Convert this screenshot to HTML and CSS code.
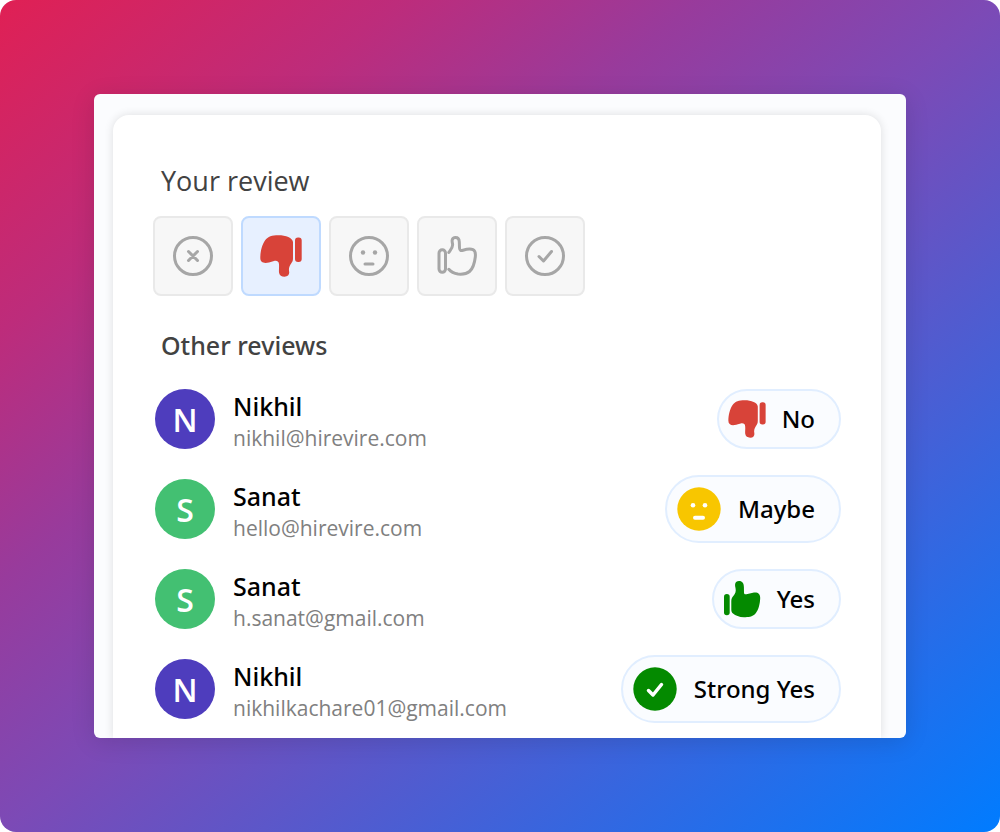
FILE: index.html
```html
<!DOCTYPE html>
<html lang="en">
<head>
    <meta charset="UTF-8">
    <meta name="viewport" content="width=device-width, initial-scale=1.0">
    <title>Reviews</title>
    <link rel="stylesheet" href="styles.css">
</head>
<body>
    <!-- shapes used more than once -->
    <svg class="sprite" aria-hidden="true">
        <symbol id="thumb-down" viewBox="0 0 42 42" overflow="visible">
            <path d="M33 7C32.500 3 26 .3 18.300 .3C12 .3 8 1.500 5 5.500C2 9.500 .3 17 .3 23C.3 27.500 4 28.700 9 27.400L14 26C17 25.400 19 26.500 19 29.500C19.200 32 18.800 35 19 37.500C19.500 40.500 21.500 41.700 24.500 41.700C28 41.700 29.500 39.500 29.200 37C28.500 33.500 29.200 32 30.500 29.500C32 27 33 26.500 33 23Z"/>
            <rect x="35" y="2.500" width="6.700" height="24.500" rx="3"/>
        </symbol>
    </svg>

    <main class="page">
        <div class="frame">
            <div class="card">
                <h2 class="title">Your review</h2>
                <div class="options">
                    <button type="button" class="option" aria-label="Strong No">
                        <svg class="icon line" viewBox="0 0 40 40">
                            <circle cx="20" cy="20" r="18.500"/>
                            <path d="M15.500 15.500L24.500 24.500M24.500 15.500L15.500 24.500"/>
                        </svg>
                    </button>
                    <button type="button" class="option selected" aria-label="No" aria-pressed="true">
                        <svg class="icon-thumb red" viewBox="0 0 42 42"><use href="#thumb-down"/></svg>
                    </button>
                    <button type="button" class="option" aria-label="Maybe">
                        <svg class="icon line" viewBox="0 0 40 40">
                            <circle cx="20" cy="20" r="18.500"/>
                            <path d="M16 28H24"/>
                            <circle class="dot" cx="14" cy="16.500" r="2.200"/>
                            <circle class="dot" cx="26" cy="16.500" r="2.200"/>
                        </svg>
                    </button>
                    <button type="button" class="option" aria-label="Yes">
                        <svg class="icon line" viewBox="0 0 40 40">
                            <rect x="2" y="13.800" width="6.500" height="22.500" rx="3.200"/>
                            <path d="M11.800 16.500C13 14.500 15.500 12.500 15.600 9C15.700 7 14.800 6.200 15.200 4C15.600 2.200 17 1.500 18.500 1.500C21 1.500 22.200 3.500 22.300 6L22.500 12C22.700 14.600 24 14.800 26 14.200C30 13 33.500 12.600 36 13.600C38.500 14.700 38.700 17.500 38.300 21C37.600 27 36 32.500 32.500 35.500C29.500 38 25 38.400 21 38C17 37.500 14 36 11.800 33.300"/>
                        </svg>
                    </button>
                    <button type="button" class="option" aria-label="Strong Yes">
                        <svg class="icon line" viewBox="0 0 40 40">
                            <circle cx="20" cy="20" r="18.500"/>
                            <path d="M14 20.500L18.500 25L26.500 15.500"/>
                        </svg>
                    </button>
                </div>

                <h2 class="title medium">Other reviews</h2>
                <ul class="reviews">
                    <li class="review">
                        <span class="avatar purple">N</span>
                        <div class="person">
                            <div class="name">Nikhil</div>
                            <div class="email">nikhil@hirevire.com</div>
                        </div>
                        <div class="badge">
                            <svg class="badge-thumb red" viewBox="1 1 40 40"><use href="#thumb-down" width="42" height="42"/></svg>
                            No
                        </div>
                    </li>
                    <li class="review">
                        <span class="avatar green">S</span>
                        <div class="person">
                            <div class="name">Sanat</div>
                            <div class="email">hello@hirevire.com</div>
                        </div>
                        <div class="badge">
                            <svg class="badge-face" viewBox="0 0 44 44">
                                <circle cx="22" cy="22" r="21.700" fill="#f8c600"/>
                                <circle cx="16" cy="18.300" r="2.300" fill="#fff"/>
                                <circle cx="28" cy="18.300" r="2.300" fill="#fff"/>
                                <path d="M18 30.700H26" stroke="#fff" stroke-width="4" stroke-linecap="round"/>
                            </svg>
                            Maybe
                        </div>
                    </li>
                    <li class="review">
                        <span class="avatar green">S</span>
                        <div class="person">
                            <div class="name">Sanat</div>
                            <div class="email">h.sanat@gmail.com</div>
                        </div>
                        <div class="badge">
                            <svg class="badge-thumb dark-green" viewBox="0 0 36 36">
                                <rect x="0" y="13" width="5.700" height="21.300" rx="2.800"/>
                                <path d="M7.300 20C7.300 17.500 8 16.500 9.500 14.700C11.500 12.500 12.200 10 11.500 7C10.800 4 10.500 0 15 0C18.500 0 19.800 2.500 19.900 6L20 11.500C20 13.500 21.500 13.600 23.500 13L29 11.700C34 11 36.300 13 36.200 17C36 23 34.500 29 31.500 32.500C28.500 36 24 36.200 20 36.200C15 36.200 11.500 34.500 9 32.500C7.700 31.400 7.300 30.500 7.300 28.500Z"/>
                            </svg>
                            Yes
                        </div>
                    </li>
                    <li class="review">
                        <span class="avatar purple">N</span>
                        <div class="person">
                            <div class="name">Nikhil</div>
                            <div class="email">nikhilkachare01@gmail.com</div>
                        </div>
                        <div class="badge">
                            <svg class="badge-face" viewBox="0 0 44 44">
                                <circle cx="22" cy="22" r="21.700" fill="#048a00"/>
                                <path d="M15.500 23.500L20 28L28.500 17.500" fill="none" stroke="#fff" stroke-width="3.500" stroke-linecap="round" stroke-linejoin="round"/>
                            </svg>
                            Strong Yes
                        </div>
                    </li>
                </ul>
            </div>
        </div>
    </main>
</body>
</html>
```
FILE: styles.css
```css
* {
    box-sizing: border-box;
}

body {
    margin: 0;
    background: #fff;
    font-family: "Open Sans", "Noto Sans", sans-serif;
    color: #000;
}

.sprite {
    display: none;
}

.page {
    min-height: 100vh;
    padding: 94px;
    border-radius: 16px;
    background: linear-gradient(to bottom right, #e02054, #bd2c7b 20%, #983b9c 35%, #7c4ab6 50%, #007cff);
}

.frame {
    padding: 21px 25px 0 19px;
    border-radius: 6px;
    background: #fbfcfe;
    box-shadow: 0 4px 24px rgba(0, 0, 0, 0.12);
    overflow: hidden;
}

.card {
    padding: 49px 40px 4px;
    border-radius: 16px 16px 0 0;
    background: #fff;
    box-shadow: 0 0 10px rgba(0, 0, 0, 0.12);
}

.title {
    margin: 0 8px 18px;
    font-size: 27px;
    line-height: 34px;
    font-weight: 400;
    color: #424242;
}

.title.medium {
    margin: 32px 8px 12px;
    font-size: 25px;
}

/* Noto Sans has the medium weight */
.title.medium,
.name,
.badge {
    font-family: "Noto Sans", "Open Sans", sans-serif;
    font-weight: 500;
}

.options {
    display: flex;
    flex-wrap: wrap;
    gap: 8px;
}

.option {
    display: flex;
    align-items: center;
    justify-content: center;
    width: 80px;
    height: 80px;
    padding: 0;
    border: 2px solid #e9e9e9;
    border-radius: 8px;
    background: #f7f7f7;
    cursor: pointer;
}

.option.selected {
    border-color: #bfdaff;
    background: #e7f0ff;
}

.icon {
    width: 40px;
    height: 40px;
}

.icon-thumb {
    width: 42px;
    height: 42px;
}

.line {
    fill: none;
    stroke: #a6a6a6;
    stroke-width: 3;
    stroke-linecap: round;
    stroke-linejoin: round;
}

.dot {
    fill: #a6a6a6;
    stroke: none;
}

.red {
    fill: #d84339;
}

.dark-green {
    fill: #048a00;
}

.reviews {
    margin: 0;
    padding: 0 0 0 2px;
    list-style: none;
}

.review {
    display: flex;
    align-items: center;
    gap: 18px;
    height: 90px;
}

.avatar {
    display: flex;
    align-items: center;
    justify-content: center;
    flex: none;
    width: 60px;
    height: 60px;
    border-radius: 50%;
    font-size: 32px;
    font-weight: 600;
    color: #fff;
}

.purple {
    background: #4e3dbd;
}

.green {
    background: #43c072;
}

.person {
    flex: 1;
    min-width: 0;
    padding-top: 4px;
}

.name {
    font-size: 25px;
    line-height: 34px;
}

.email {
    font-size: 21px;
    line-height: 30px;
    color: #808080;
}

.badge {
    display: flex;
    align-items: center;
    gap: 17px;
    padding: 10px 24px 10px 10px;
    border: 2px solid #e1eeff;
    border-radius: 34px;
    background: #fafcff;
    font-size: 24px;
    line-height: 36px;
    white-space: nowrap;
}

.badge-thumb {
    width: 36px;
    height: 36px;
    overflow: visible;
}

.badge-face {
    width: 44px;
    height: 44px;
}
```
